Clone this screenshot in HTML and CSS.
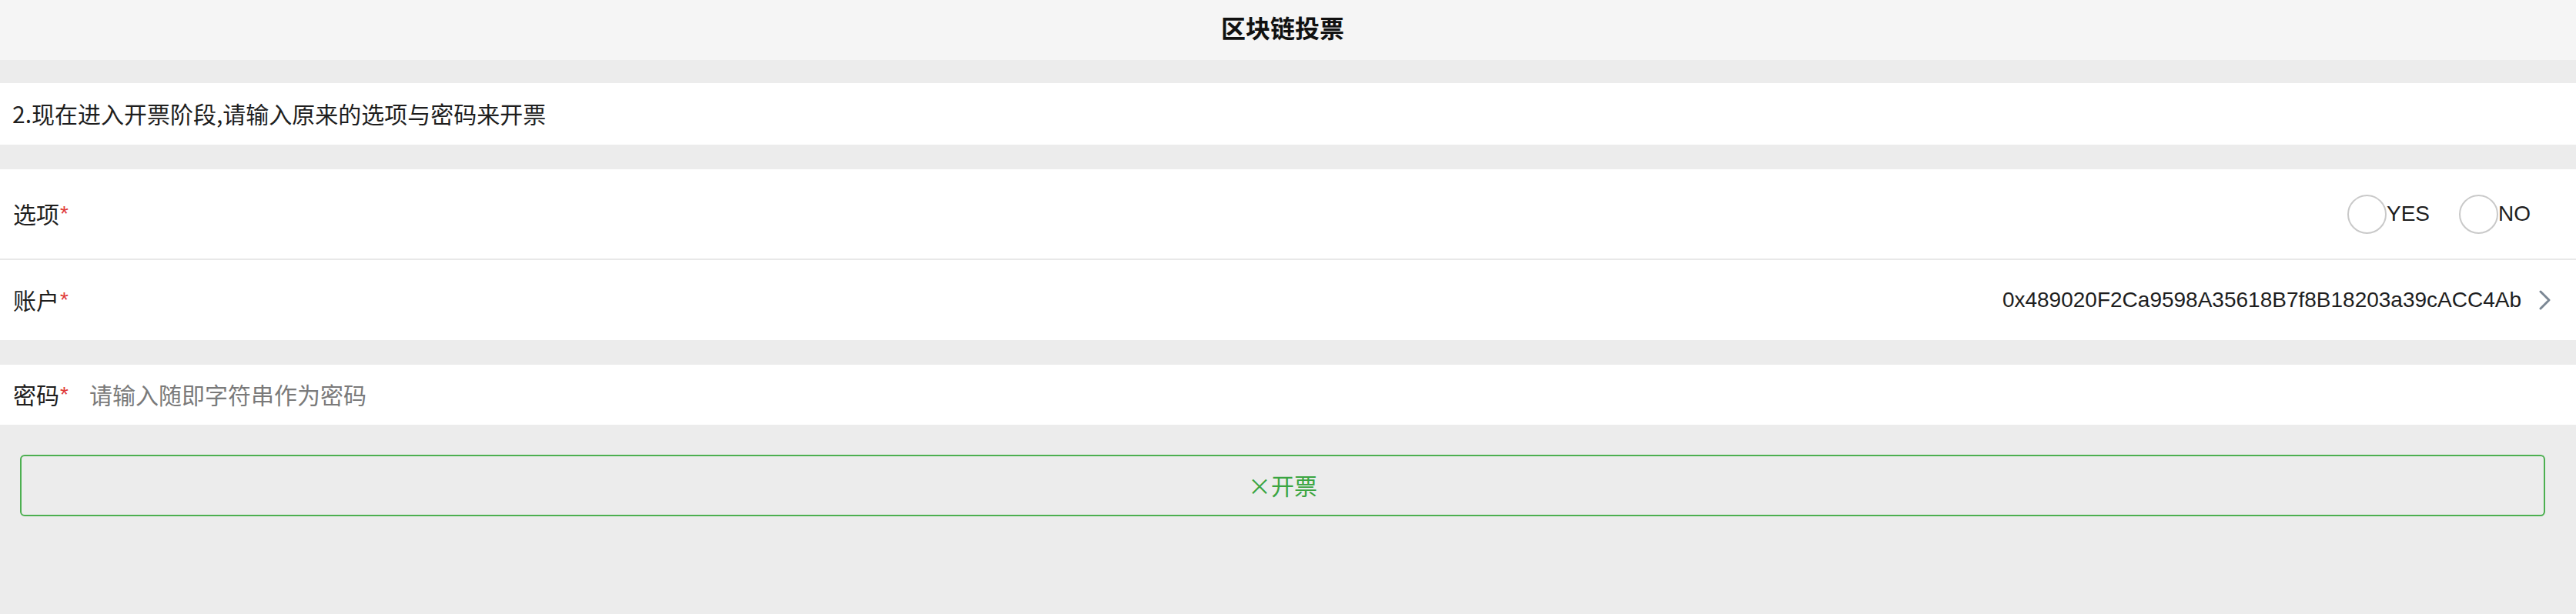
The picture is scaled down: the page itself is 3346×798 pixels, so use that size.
FILE: index.html
```html
<!DOCTYPE html>
<html lang="zh-CN">
<head>
<meta charset="utf-8">
<title>区块链投票</title>
<link rel="stylesheet" href="styles.css">
</head>
<body>
<header class="topbar"><h1 class="title">区块链投票</h1></header>
<div class="gap"></div>
<div class="notice">2.现在进入开票阶段,请输入原来的选项与密码来开票</div>
<div class="gap"></div>
<section class="group">
  <div class="row row-options">
    <span class="label">选项<span class="req">*</span></span>
    <div class="radios">
      <label class="radio"><span class="circle"></span><span class="radio-text">YES</span></label>
      <label class="radio"><span class="circle"></span><span class="radio-text">NO</span></label>
    </div>
  </div>
  <div class="row row-account">
    <span class="label">账户<span class="req">*</span></span>
    <div class="account">
      <span class="addr">0x489020F2Ca9598A35618B7f8B18203a39cACC4Ab</span>
      <svg class="chev" width="18" height="26" viewBox="0 0 18 26"><path d="M3 2 L14 13 L3 24" fill="none" stroke="#7b8794" stroke-width="3" stroke-linecap="round" stroke-linejoin="round"/></svg>
    </div>
  </div>
</section>
<div class="gap"></div>
<div class="row row-password">
  <span class="label">密码<span class="req">*</span></span>
  <span class="placeholder">请输入随即字符串作为密码</span>
</div>
<div class="btn-wrap">
  <button class="btn">×开票</button>
</div>
</body>
</html>
```
FILE: styles.css
```css
html, body {
  margin: 0;
  padding: 0;
}
body {
  background: #ececec;
  font-family: "Liberation Sans", "Noto Sans CJK SC", sans-serif;
  color: #1e1e1e;
  height: 798px;
  overflow: hidden;
}
.topbar {
  height: 78px;
  background: #f5f5f5;
  display: flex;
  align-items: center;
  justify-content: center;
  padding-right: 14px;
  box-sizing: border-box;
}
.title {
  margin: 0 0 8px 0;
  font-size: 32px;
  font-weight: bold;
  color: #111;
  font-family: "Noto Sans CJK SC", sans-serif;
}
.gap {
  height: 30px;
}
.notice {
  height: 80px;
  background: #fff;
  display: flex;
  align-items: center;
  padding-left: 16px;
  padding-bottom: 2px;
  box-sizing: border-box;
  font-size: 30px;
  font-family: "Noto Sans CJK SC", sans-serif;
  color: #1e1e1e;
}
.notice + .gap {
  height: 32px;
}
.group {
  background: #fff;
}
.row {
  display: flex;
  align-items: center;
  background: #fff;
  padding-left: 17px;
  box-sizing: border-box;
}
.row-options {
  height: 118px;
  justify-content: space-between;
  padding-right: 59px;
  border-bottom: 2px solid #e8e8e8;
}
.row-account {
  height: 104px;
  justify-content: space-between;
  padding-right: 31px;
}
.group + .gap {
  height: 32px;
}
.row-password {
  height: 78px;
}
.label {
  font-size: 30px;
  font-family: "Noto Sans CJK SC", sans-serif;
  color: #1e1e1e;
  margin-bottom: 2px;
}
.req {
  color: #e03a3a;
  font-family: "Liberation Sans", sans-serif;
  font-size: 28px;
  margin-left: 1px;
  vertical-align: 3px;
}
.radios {
  display: flex;
  align-items: center;
  gap: 38px;
}
.radio {
  display: flex;
  align-items: center;
}
.circle {
  width: 51px;
  height: 51px;
  box-sizing: border-box;
  border: 2px solid #c9c9c9;
  border-radius: 50%;
  background: #fff;
}
.radio-text {
  font-size: 28px;
  color: #1e1e1e;
}
.account {
  display: flex;
  align-items: center;
  gap: 22px;
}
.addr {
  font-size: 28px;
  color: #1e1e1e;
}
.chev {
  display: block;
}
.placeholder {
  margin-left: 27px;
  margin-bottom: 2px;
  font-size: 30px;
  color: #7a7a7a;
  font-family: "Noto Sans CJK SC", sans-serif;
}
.btn-wrap {
  padding: 39px 40px 0 26px;
}
.btn {
  display: flex;
  align-items: center;
  justify-content: center;
  width: 100%;
  height: 80px;
  background: #ececec;
  border: 2px solid #4caf50;
  border-radius: 6px;
  color: #3aa541;
  font-size: 30px;
  font-family: "Noto Sans CJK SC", sans-serif;
  padding: 0 0 2px 0;
}
```
